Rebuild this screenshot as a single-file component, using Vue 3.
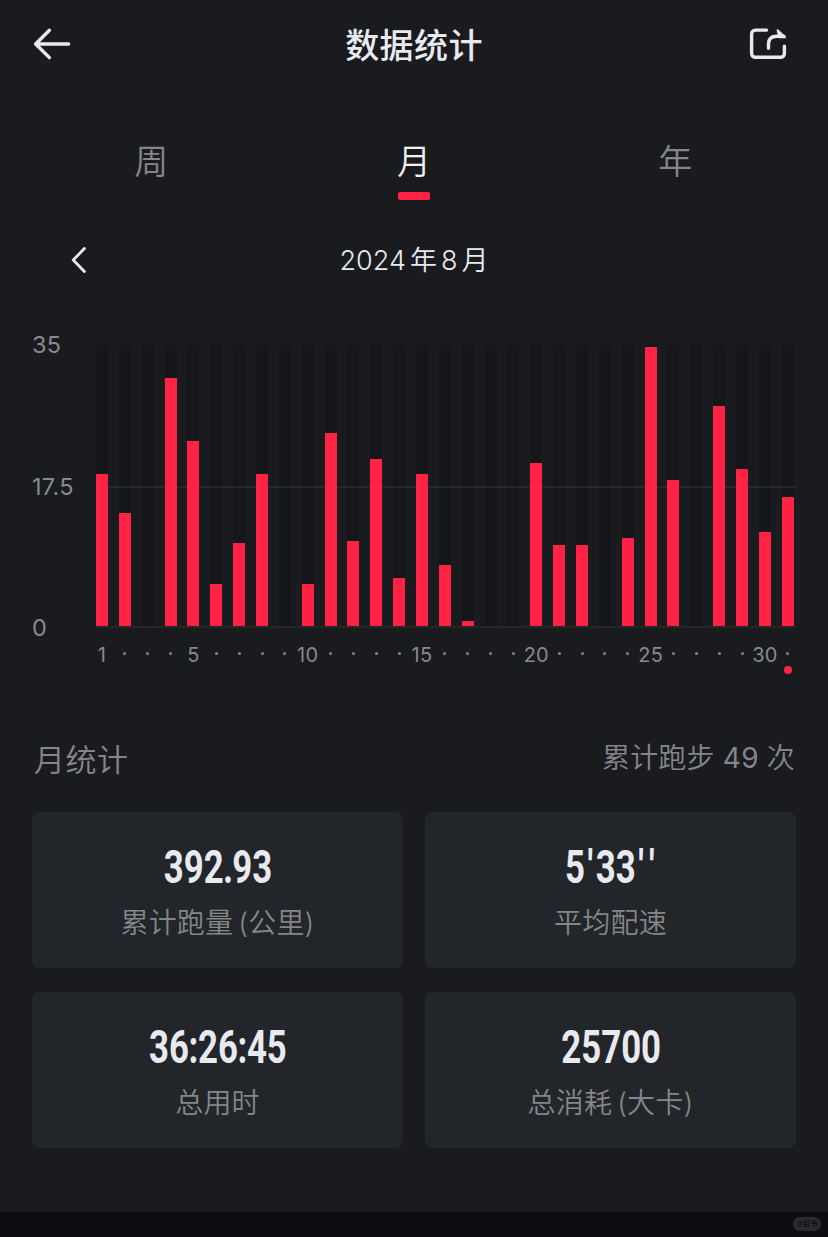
<script setup>
const tabs = [
  { label: '周' },
  { label: '月', active: true },
  { label: '年' },
]

const CHART_HEIGHT = 281
const heights = [
  152, 113, 0, 248, 185, 42, 83, 152, 0, 42, 193, 85, 167, 48, 152, 61,
  5, 0, 0, 163, 81, 81, 0, 88, 279, 146, 0, 220, 157, 94, 129,
]
const days = heights.map((h, i) => {
  const day = i + 1
  return {
    day,
    percent: (h / CHART_HEIGHT) * 100,
    label: day === 1 || day % 5 === 0 ? String(day) : '',
    today: day === 31,
  }
})

const stats = [
  { parts: ['392', '.', '93'], label: '累计跑量', unit: '(公里)' },
  { parts: ['5', "'", '33', "'", "'"], label: '平均配速' },
  { parts: ['36', ':', '26', ':', '45'], label: '总用时' },
  { parts: ['25700'], label: '总消耗', unit: '(大卡)' },
]
const kinds = { '.': 'dot', ':': 'colon', "'": 'prime' }
</script>

<template>
  <div class="screen">
    <header class="bar">
      <svg class="back" width="40" height="34" viewBox="0 0 40 34">
        <path d="M17.4 3.2 3.6 17l13.8 13.6M4 17h32.6" />
      </svg>
      <h1>数据统计</h1>
      <svg class="share" width="40" height="34" viewBox="0 0 40 34">
        <path d="M18.6 3.1H7.4a3.8 3.8 0 0 0-3.8 3.8v19.6a3.8 3.8 0 0 0 3.8 3.8h25.2a3.8 3.8 0 0 0 3.8-3.8v-7.2" />
        <path d="M20.5 21.2v-4.1c0-5.2 3-7.9 8.2-7.9h7.2" />
        <path class="tip" d="M29.6 3.2 37 10.200H31.500Z" />
      </svg>
    </header>

    <nav class="tabs">
      <div v-for="t in tabs" :key="t.label" class="tab" :class="{ active: t.active }">
        <span>{{ t.label }}</span>
        <i v-if="t.active"></i>
      </div>
    </nav>

    <div class="period">
      <svg width="20" height="30" viewBox="0 0 20 30"><path d="M15.4 3.6 4.2 15l11.2 11.4" /></svg>
      <span class="date"><span>2024</span><span>年</span><span>8</span><span>月</span></span>
    </div>

    <section class="chart">
      <div class="axis"><span>35</span><span>17.5</span><span>0</span></div>
      <div class="plot">
        <div class="bars">
          <div v-for="d in days" :key="d.day" class="track">
            <div class="fill" :style="{ height: d.percent + '%' }"></div>
          </div>
        </div>
        <div class="labels">
          <div v-for="d in days" :key="d.day" class="tick">
            <span v-if="d.label">{{ d.label }}</span>
            <i v-else></i>
            <b v-if="d.today"></b>
          </div>
        </div>
      </div>
    </section>

    <div class="summary">
      <h2>月统计</h2>
      <p>累计跑步 <span class="count">49</span> 次</p>
    </div>

    <section class="cards">
      <article v-for="s in stats" :key="s.label" class="card">
        <div class="value"><span v-for="(p, i) in s.parts" :key="i" :class="kinds[p]">{{ p }}</span></div>
        <div class="label">{{ s.label }}<span v-if="s.unit" class="unit">{{ s.unit }}</span></div>
      </article>
    </section>

    <footer class="strip"><span>小红书</span></footer>
  </div>
</template>

<style>
body {
  background: #1a1b1f;
}
</style>

<style scoped>
.screen {
  box-sizing: border-box;
  width: 828px;
  height: 1237px;
  overflow: hidden;
  display: flex;
  flex-direction: column;
  background: #1a1b1f;
  color: #e8eaf0;
  font-family: Inter, "Noto Sans CJK SC", sans-serif;
  font-weight: 350;
}
h1, h2, p {
  margin: 0;
  font-weight: inherit;
}
svg path {
  fill: none;
  stroke: #e8eaee;
  stroke-width: 3.4;
  stroke-linecap: round;
  stroke-linejoin: round;
}
svg .tip {
  fill: #e8eaee;
  stroke-width: 2;
}
.bar {
  height: 88px;
  padding: 0 40px 0 32px;
  display: flex;
  align-items: center;
  justify-content: space-between;
}
h1 {
  font-size: 34px;
  line-height: 50px;
  font-weight: 500;
  letter-spacing: 0.4px;
  padding: 3px 0 0 8px;
}
.tabs {
  height: 112px;
  padding: 0 20px;
  display: grid;
  grid-template-columns: 1fr 1fr 1fr;
}
.tab {
  padding-top: 49px;
  display: flex;
  flex-direction: column;
  align-items: center;
  font-size: 34px;
  line-height: 50px;
  color: #85868a;
}
.tab:last-child {
  padding-right: 3px;
}
.tab.active {
  color: #f0f1f4;
}
.tab i {
  width: 32px;
  height: 8px;
  margin-top: 5px;
  border-radius: 2px;
  background: #ff2243;
}
.period {
  height: 120px;
  display: grid;
  grid-template-columns: 100px 1fr 100px;
  align-items: center;
}
.period svg {
  margin-left: 69px;
}
.period svg path {
  stroke-width: 2.8;
}
.date {
  display: flex;
  justify-content: center;
  gap: 4px;
  padding-top: 1px;
  font-size: 27px;
  line-height: 40px;
}
.chart {
  height: 420px;
  display: flex;
}
.axis {
  width: 64px;
  height: 313px;
  padding: 10px 0 0 32px;
  display: flex;
  flex-direction: column;
  justify-content: space-between;
  font-size: 23.5px;
  line-height: 30px;
  font-weight: 400;
  letter-spacing: 0.3px;
  color: #88898d;
}
.plot {
  width: 700px;
  padding-top: 25px;
}
.bars {
  height: 281px;
  padding-right: 2px;
  border-bottom: 2px solid #25262a;
  display: flex;
  justify-content: space-between;
  background: linear-gradient(#27282c, #27282c) 0 141px / 100% 2px no-repeat;
}
.track {
  width: 12px;
  display: flex;
  align-items: flex-end;
  background: linear-gradient(#151619 0 141px, #222327 141px 143px, #151619 143px);
}
.fill {
  width: 12px;
  background: #ff2243;
}
.labels {
  padding-right: 2px;
  display: flex;
  justify-content: space-between;
}
.tick {
  position: relative;
  width: 12px;
  height: 52px;
  display: flex;
  justify-content: center;
  font-size: 20px;
  line-height: 54px;
  font-weight: 400;
  letter-spacing: 0.3px;
  color: #88898d;
}
.tick i {
  width: 3px;
  height: 3px;
  margin-top: 24px;
  border-radius: 50%;
  background: #85868a;
}
.tick b {
  position: absolute;
  left: 2px;
  top: 38px;
  width: 8px;
  height: 8px;
  border-radius: 50%;
  background: #ff2243;
}
.summary {
  height: 72px;
  padding: 0 33px 0 34px;
  display: flex;
  justify-content: space-between;
  color: #85868a;
}
h2 {
  font-size: 31px;
  line-height: 40px;
  letter-spacing: 0.5px;
}
.summary p {
  font-size: 28px;
  line-height: 37px;
  letter-spacing: 0.2px;
}
.count {
  font-weight: 400;
}
.cards {
  padding: 0 32px;
  display: grid;
  grid-template-columns: 1fr 1fr;
  gap: 24px 22px;
}
.card {
  height: 156px;
  border-radius: 8px;
  background: #222529;
  display: flex;
  flex-direction: column;
  align-items: center;
}
.value {
  height: 60px;
  margin-top: 24px;
  padding-left: 2px;
  font-family: Roboto, sans-serif;
  font-size: 47px;
  line-height: 61px;
  font-weight: 700;
  white-space: nowrap;
  transform: scaleX(0.74);
}
.dot {
  margin: 0 -1px;
}
.colon {
  margin: 0 -0.5px;
}
.prime {
  margin: 0 3.5px;
}
.label {
  margin-top: 6px;
  font-size: 28px;
  line-height: 42px;
  letter-spacing: 0.2px;
  color: #85868a;
}
.unit {
  margin-left: 5px;
}
.strip {
  height: 25px;
  margin-top: auto;
  padding: 0 7px 2px 0;
  box-sizing: border-box;
  display: flex;
  align-items: center;
  justify-content: flex-end;
  background: #0d0e12;
}
.strip span {
  width: 28px;
  height: 14px;
  border-radius: 7px;
  background: #2b2c2f;
  color: #0d0e12;
  font-size: 7px;
  line-height: 13px;
  font-weight: 700;
  text-align: center;
}
</style>
